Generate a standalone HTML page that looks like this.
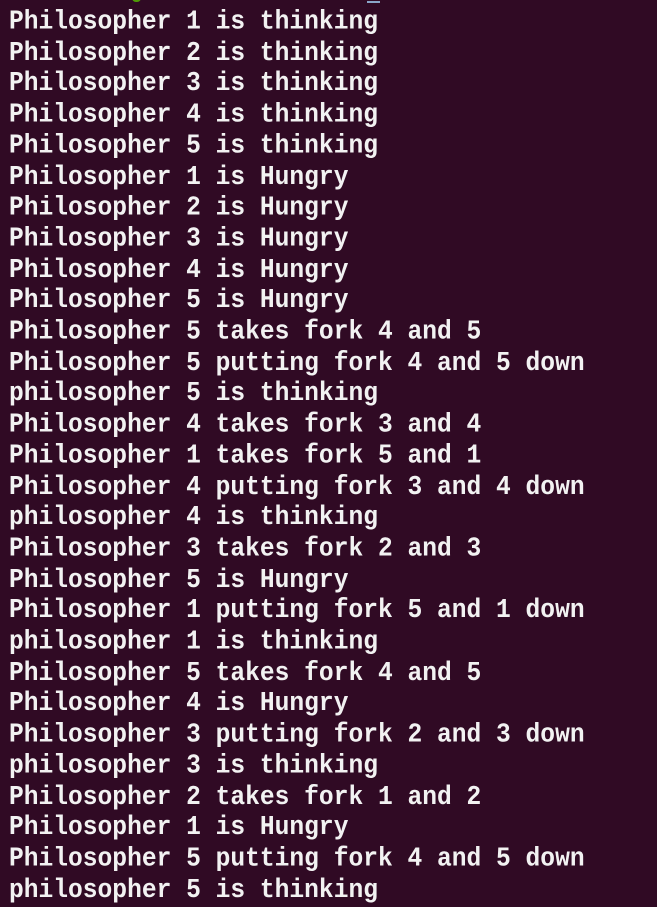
<!DOCTYPE html>
<html><head><meta charset="utf-8"><style>
html,body{margin:0;padding:0;background:#300a24;width:657px;height:907px;overflow:hidden}
pre{position:absolute;left:9px;top:8px;margin:0;font-family:"Liberation Mono",monospace;font-weight:bold;font-size:24.6px;line-height:31px;color:#f2f2f2;letter-spacing:0;transform:scaleY(1.08);transform-origin:0 0}
.g{position:absolute;left:132px;top:-3px;width:9px;height:5px;background:#4e9a06;border-radius:0 0 4px 4px}
.u{position:absolute;left:367px;top:1px;width:13px;height:2px;background:#8aa6c8}
</style></head><body>
<div class="g"></div><div class="u"></div>
<pre style="line-height:28.7px">Philosopher 1 is thinking
Philosopher 2 is thinking
Philosopher 3 is thinking
Philosopher 4 is thinking
Philosopher 5 is thinking
Philosopher 1 is Hungry
Philosopher 2 is Hungry
Philosopher 3 is Hungry
Philosopher 4 is Hungry
Philosopher 5 is Hungry
Philosopher 5 takes fork 4 and 5
Philosopher 5 putting fork 4 and 5 down
philosopher 5 is thinking
Philosopher 4 takes fork 3 and 4
Philosopher 1 takes fork 5 and 1
Philosopher 4 putting fork 3 and 4 down
philosopher 4 is thinking
Philosopher 3 takes fork 2 and 3
Philosopher 5 is Hungry
Philosopher 1 putting fork 5 and 1 down
philosopher 1 is thinking
Philosopher 5 takes fork 4 and 5
Philosopher 4 is Hungry
Philosopher 3 putting fork 2 and 3 down
philosopher 3 is thinking
Philosopher 2 takes fork 1 and 2
Philosopher 1 is Hungry
Philosopher 5 putting fork 4 and 5 down
philosopher 5 is thinking</pre>
</body></html>
